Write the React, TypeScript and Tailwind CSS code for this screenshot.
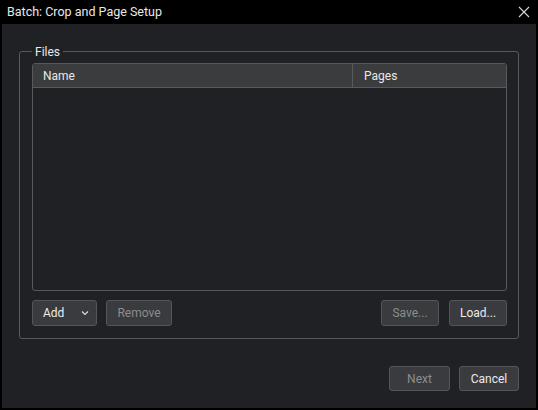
import React from 'react';

const font = { fontFamily: 'Roboto, "Noto Sans", sans-serif' };

const Btn: React.FC<{ w: string; disabled?: boolean; h?: string; className?: string; children?: React.ReactNode }> = ({ w, disabled, h = 'h-[26px]', className = 'justify-center', children }) => (
    <button
        className={`${w} ${h} flex items-center ${className} rounded-[3px] border border-[#555659] bg-[#3a3b3e] text-[12px] ${disabled ? 'text-[#8c8c8c]' : 'text-[#ececec]'}`}
    >
        {children}
    </button>
);

export default function App() {
    return (
        <div className="w-[538px] h-[410px] bg-black flex flex-col" style={font}>
            <header className="h-[24px] flex items-center justify-between pl-[7px] pr-[8px] text-[12.5px] text-[#e8e8e8]">
                <span>Batch: Crop and Page Setup</span>
                <svg width="12" height="12" viewBox="0 0 12 12" className="text-[#d8d8d8]">
                    <path d="M1 1L11 11M11 1L1 11" stroke="currentColor" strokeWidth="1.1" />
                </svg>
            </header>
            <main className="flex-1 mx-[2px] mb-[2px] bg-[#202124] flex flex-col pl-[17px] pr-[17px]">
                <section className="relative mt-[27px] w-[500px] h-[288px] rounded-[3px] border border-[#58595c] pt-[11px] pl-[12px] pr-[11px] pb-[12px] flex flex-col">
                    <span className="absolute -top-[8px] left-[12px] px-[3px] bg-[#202124] text-[12px] leading-[16px] text-[#e8e8e8]">Files</span>
                    <div className="flex-1 rounded-[3px] border border-[#58595c] bg-[#202124] flex flex-col overflow-hidden">
                        <div className="h-[24px] flex bg-[#3b3c3e] border-b border-[#58595c] text-[12px] text-[#e8e8e8]">
                            <div className="w-[320px] border-r border-[#58595c] flex items-center pl-[10px] pt-[1px]">Name</div>
                            <div className="flex-1 flex items-center pl-[11px] pt-[1px]">Pages</div>
                        </div>
                    </div>
                    <div className="mt-[9px] flex items-center">
                        <Btn w="w-[65px]" className="justify-between pl-[10px] pr-[6px]">
                            <span>Add</span>
                            <svg width="10" height="10" viewBox="0 0 10 10">
                                <path d="M2 3.5L5 6.5L8 3.5" stroke="#e0e0e0" strokeWidth="1.1" fill="none" />
                            </svg>
                        </Btn>
                        <div className="ml-[9px]"><Btn w="w-[66px]" disabled>Remove</Btn></div>
                        <div className="flex-1" />
                        <Btn w="w-[58px]" disabled>Save...</Btn>
                        <div className="ml-[10px]"><Btn w="w-[58px]">Load...</Btn></div>
                    </div>
                </section>
                <div className="mt-[27px] flex justify-end gap-[9px]">
                    <Btn w="w-[61px]" h="h-[25px]" disabled>Next</Btn>
                    <Btn w="w-[60px]" h="h-[25px]">Cancel</Btn>
                </div>
            </main>
        </div>
    );
}
